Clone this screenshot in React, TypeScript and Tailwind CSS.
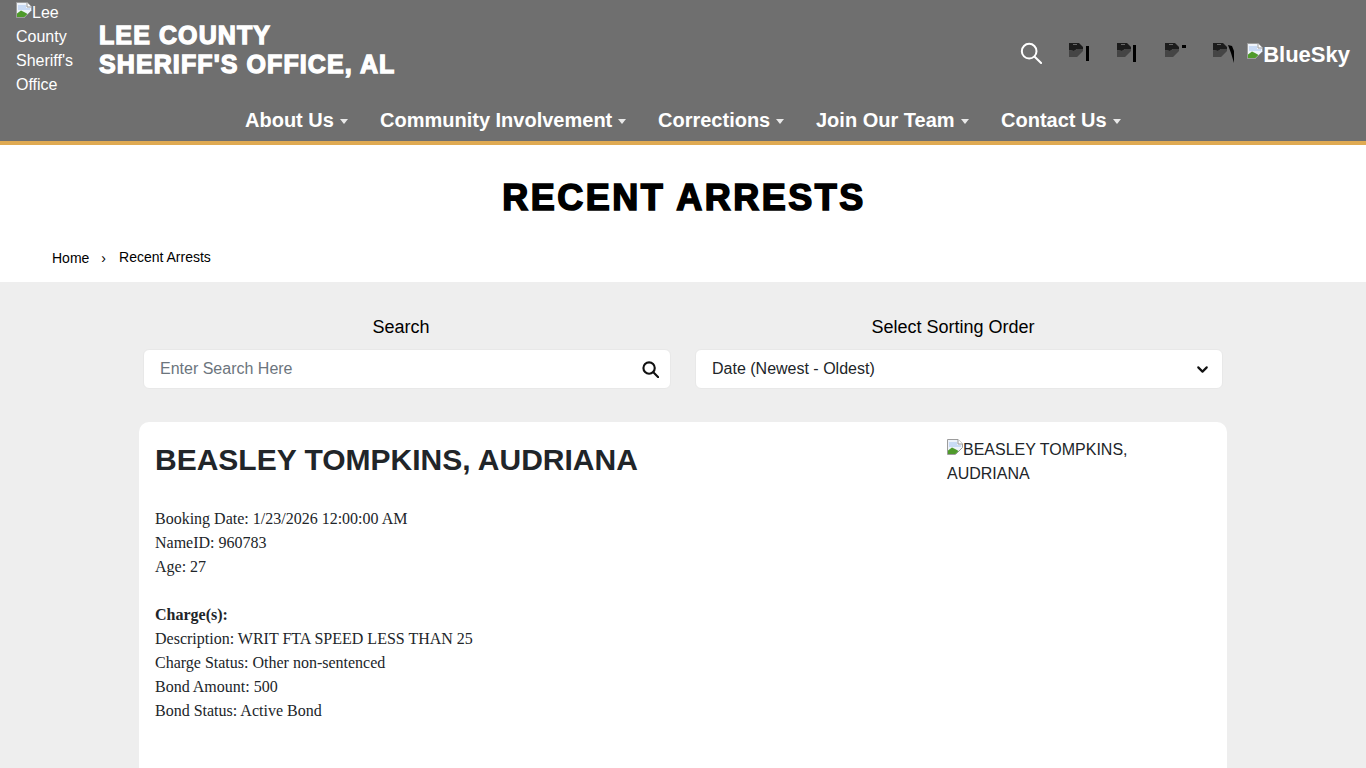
import React from "react";
import { ChevronDown } from "lucide-react";

const navItems = [
  { label: "About Us", width: "w-[135px]" },
  { label: "Community Involvement", width: "w-[278px]" },
  { label: "Corrections", width: "w-[158px]" },
  { label: "Join Our Team", width: "w-[185px]" },
  { label: "Contact Us", width: "w-[121px]" },
];

const BrokenImage: React.FC = () => (
  <svg width="16" height="16" viewBox="0 0 16 16" className="mt-[1px] inline-block align-top">
    <path d="M0.5 0.5H11L15.5 5V8.5L8.5 15.5H0.5Z" fill="#eef3fa" stroke="#9c9c9c" />
    <path d="M11 0.5V5H15.5" fill="#ffffff" stroke="#9c9c9c" />
    <path d="M2 3h8v3h4v2H2z" fill="#c9dbf5" />
    <path d="M1 15V11.5L5 8.5L9 10.5L11.5 12L8.5 15Z" fill="#4f9a2b" />
  </svg>
);

// social icons that failed to load: dark clipped picture plus a sliver of the glyph
const SocialIcon: React.FC<{ sliver: string }> = ({ sliver }) => (
  <svg width="24" height="24" viewBox="0 0 24 24">
    <path d="M1 1H11L15 5V7H9L6 9L1 8Z" fill="#1c1c1c" />
    <path d="M1 8L6 9L9 7H15V9L9 15H1Z" fill="#454545" />
    <path d="M5 2h4v1H5z" fill="#666666" />
    <path d={sliver} fill="#000000" />
  </svg>
);

const Search: React.FC<{ width: number; stroke: number }> = ({ width, stroke }) => (
  <svg width={width} height={width} viewBox="0 0 24 24" fill="none" stroke="currentColor" strokeWidth={stroke} strokeLinecap="round">
    <circle cx="10" cy="10" r="8" />
    <path d="M16 16l7 7" />
  </svg>
);

const Caret: React.FC = () => (
  <svg width="8" height="5" viewBox="0 0 8 5" className="ml-[6px] mt-[2px]">
    <path d="M0 0h8L4 5Z" fill="#ffffff" fillOpacity="0.85" />
  </svg>
);

const App: React.FC = () => {
  return (
    <div className="h-[768px] overflow-hidden bg-[#eeeeee] font-['Liberation_Sans',Arial,sans-serif] text-[#212529]">
      <header className="h-[145px] bg-[#6f6f6f] border-b-4 border-[#dfaa52] text-white">
        <div className="flex h-[96px]">
          <div className="ml-4 w-[64px] pt-[1px] text-[16px] leading-[24px]">
            <BrokenImage />
            Lee County Sheriff's Office
          </div>
          <div className="ml-[19px] pt-[21px] text-[25px] font-bold leading-[29px] tracking-[1.1px] [-webkit-text-stroke:1.3px_white]">
            <div>LEE COUNTY</div>
            <div>SHERIFF'S OFFICE, AL</div>
          </div>
          <div className="ml-auto flex items-start pt-[42px] pr-4">
            <div className="mr-[26px] flex items-start"><Search width={22} stroke={2.2} /></div>
            <div className="flex gap-6">
              <SocialIcon sliver="M18 4h3v15h-3Z" />
              <SocialIcon sliver="M17 3h3v17h-3Z" />
              <SocialIcon sliver="M18 3h4v3h-4Z" />
              <SocialIcon sliver="M16 3l4 1 2 5v12l-3-10Z" />
            </div>
            <div className="ml-[11px] text-[22px] font-bold leading-[26px] whitespace-nowrap">
              <BrokenImage />
              BlueSky
            </div>
          </div>
        </div>
        <nav className="ml-[1px] flex justify-center">
          <div className="flex">
            {navItems.map((item) => (
              <div key={item.label} className={`flex items-center ${item.width} text-[20px] font-bold leading-[48px]`}>
                <span className="whitespace-nowrap">{item.label}</span>
                <Caret />
              </div>
            ))}
          </div>
        </nav>
      </header>

      <section className="h-[137px] bg-white text-black">
        <h1 className="ml-[2px] pt-[31px] text-center text-[36px] font-bold leading-[44px] tracking-[2.5px] [-webkit-text-stroke:1.6px_black]">
          RECENT ARRESTS
        </h1>
        <div className="ml-[52px] mt-[24px] flex items-center text-[14px] leading-[24px]">
          <span className="mt-[2px]">Home</span>
          <span className="mx-[12px] mt-[2px] text-[14px]">›</span>
          <span className="ml-[1px]">Recent Arrests</span>
        </div>
      </section>

      <main className="mx-auto w-[1088px] pt-[32px]">
        <div className="flex gap-6 px-[4px]">
          <div className="flex-1">
            <div className="pr-[12px] text-center text-[18px] leading-[27px] text-black">Search</div>
            <div className="mt-[8px] flex h-[40px] items-center justify-between rounded-[6px] border border-[#e8e8e8] bg-white pl-4 pr-[11px]">
              <span className="text-[16px] text-[#6c757d]">Enter Search Here</span>
              <span className="text-[#111]"><Search width={17} stroke={3} /></span>
            </div>
          </div>
          <div className="flex-1">
            <div className="pr-[12px] text-center text-[18px] leading-[27px] text-black">Select Sorting Order</div>
            <div className="mt-[8px] flex h-[40px] items-center justify-between rounded-[6px] border border-[#e8e8e8] bg-white pl-4 pr-[11px]">
              <span className="text-[16px] text-[#212529]">Date (Newest - Oldest)</span>
              <ChevronDown size={17} strokeWidth={3} className="text-[#111]" />
            </div>
          </div>
        </div>

        <article className="mt-[33px] flex h-[400px] rounded-t-[10px] bg-white pl-4">
          <div className="w-[792px]">
            <h2 className="pt-[19px] text-[30px] font-bold leading-[38px]">BEASLEY TOMPKINS, AUDRIANA</h2>
            <div className="mt-[28px] font-['Liberation_Serif',serif] text-[16px] leading-[24px]">
              <div>Booking Date: 1/23/2026 12:00:00 AM</div>
              <div>NameID: 960783</div>
              <div>Age: 27</div>
              <div className="mt-[24px] font-bold">Charge(s):</div>
              <div>Description: WRIT FTA SPEED LESS THAN 25</div>
              <div>Charge Status: Other non-sentenced</div>
              <div>Bond Amount: 500</div>
              <div>Bond Status: Active Bond</div>
            </div>
          </div>
          <div className="w-[220px] pt-[16px] text-[16px] leading-[24px]">
            <BrokenImage />
            BEASLEY TOMPKINS, AUDRIANA
          </div>
        </article>
      </main>
    </div>
  );
};

export default App;
